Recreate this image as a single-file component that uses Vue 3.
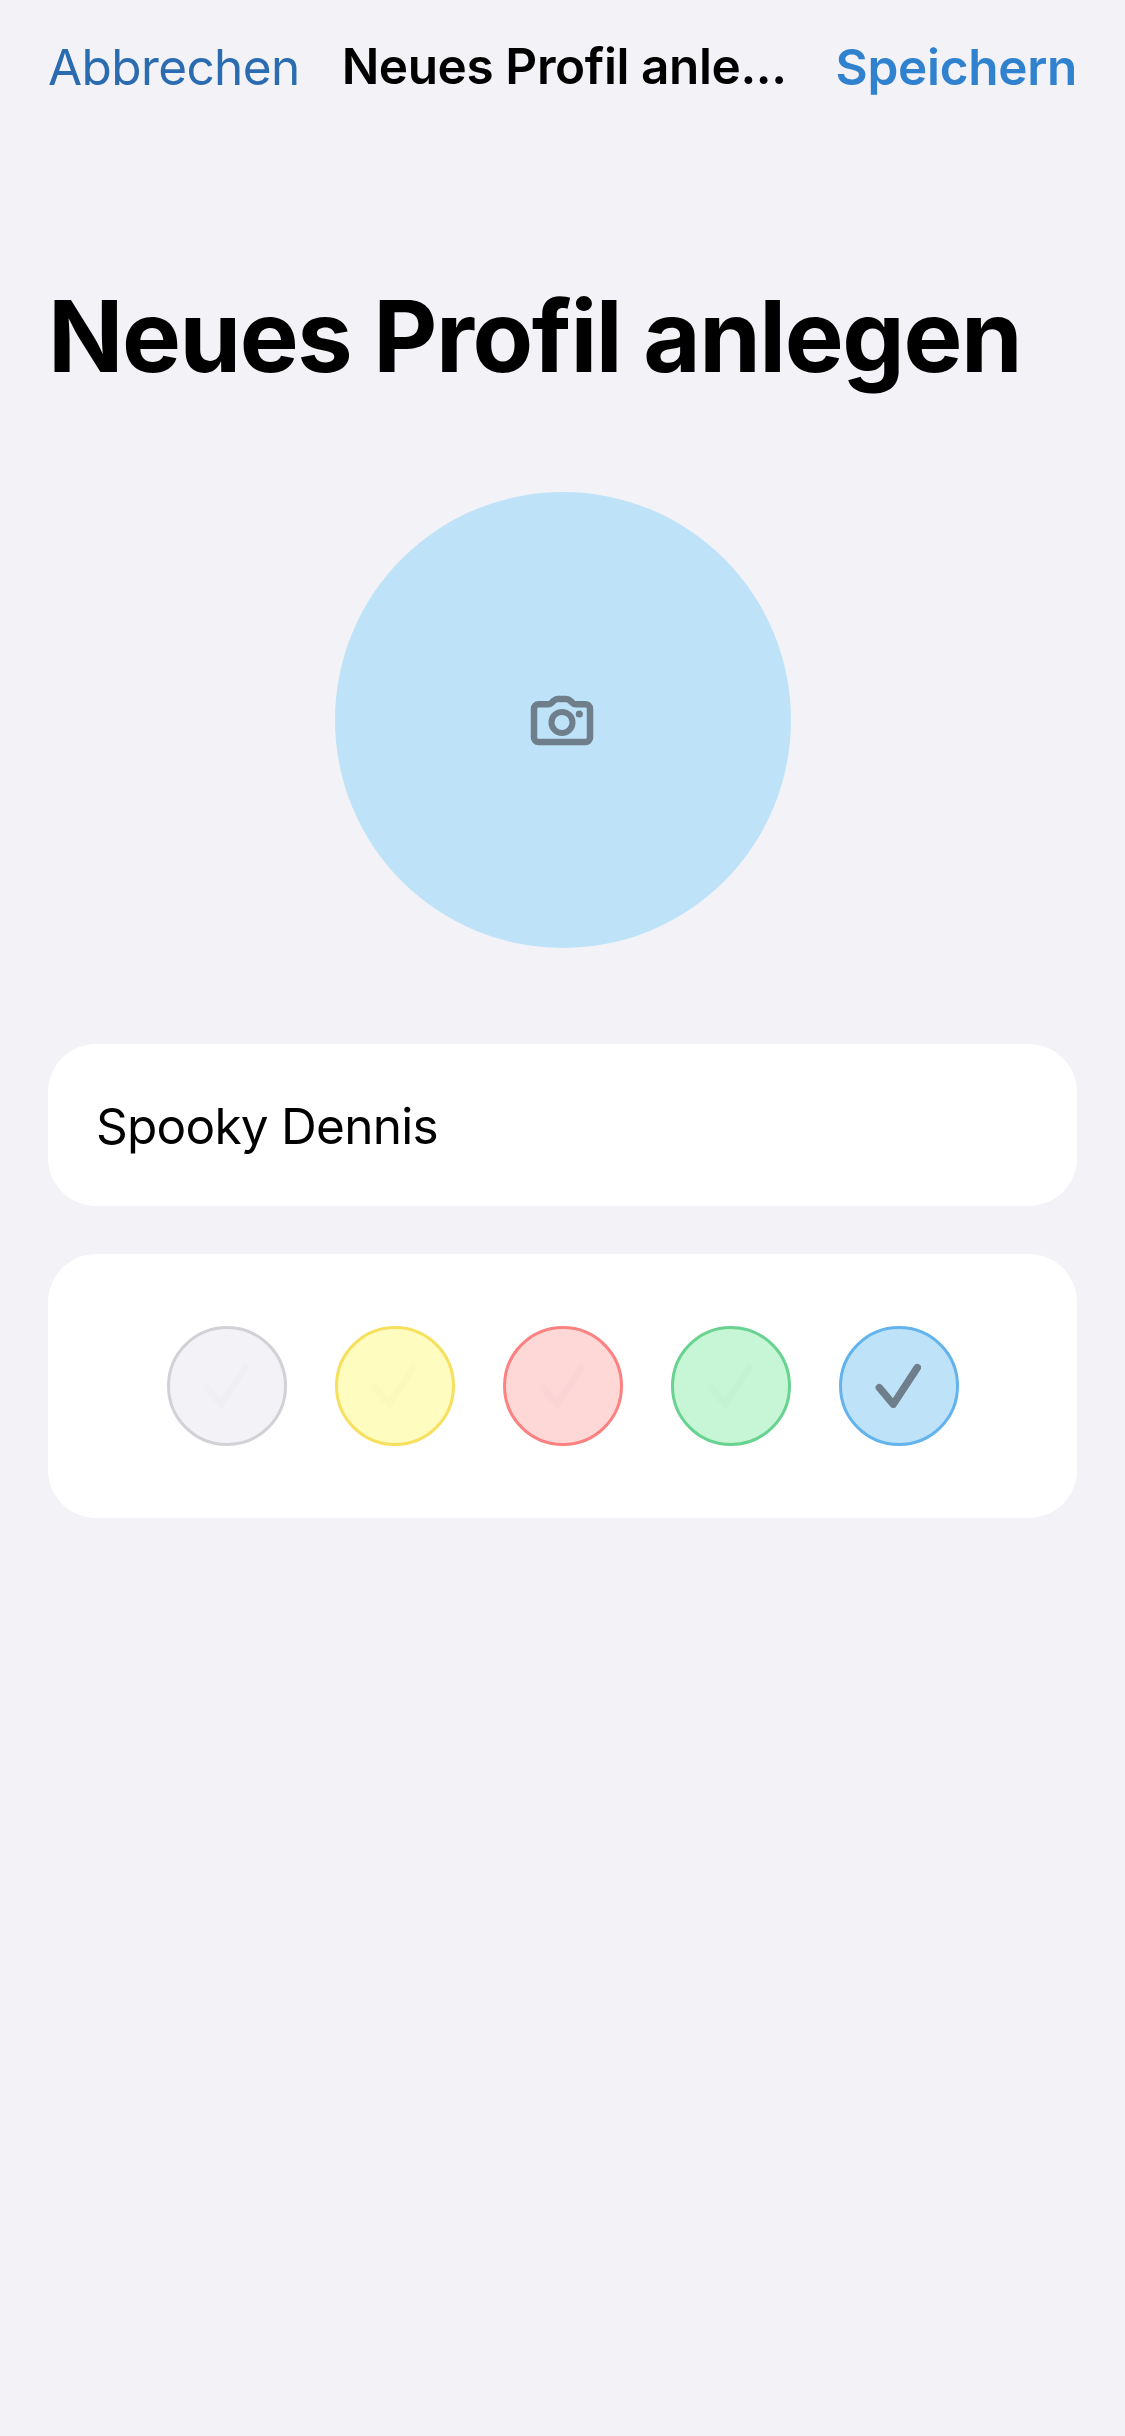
<script setup>
import { ref } from 'vue'

const name = ref('Spooky Dennis')
const selected = ref('blue')
const swatches = [
  { id: 'gray' },
  { id: 'yellow' },
  { id: 'red' },
  { id: 'green' },
  { id: 'blue' },
]
</script>

<template>
  <main class="screen">
    <header class="navbar">
      <a class="cancel">Abbrechen</a>
      <span class="title">Neues Profil anle...</span>
      <a class="save">Speichern</a>
    </header>

    <h1 class="heading">Neues Profil anlegen</h1>

    <div class="avatar">
      <svg class="camera" width="72" height="72" viewBox="0 0 72 72" fill="none">
        <g class="ink-group">
          <path
            d="M11.5 20.3H21c1.6 0 2.6-.5 3.7-1.6l2.2-2.1c1-1.1 2.200-1.700 3.800-1.700h8.600c1.600 0 2.800.6 3.800 1.700l2.200 2.100c1.100 1.100 2.100 1.600 3.700 1.600h9.500A4.500 4.500 0 0 1 63 24.800v28.700a4.500 4.500 0 0 1-4.500 4.500h-47A4.500 4.500 0 0 1 7 53.500V24.800A4.500 4.500 0 0 1 11.500 20.300Z"
            stroke="#3c3c43" stroke-width="6.5" stroke-linejoin="round"
          />
          <circle cx="35" cy="38.400" r="10.500" stroke="#3c3c43" stroke-width="6" />
          <circle cx="52.300" cy="30" r="3.600" fill="#3c3c43" />
        </g>
      </svg>
    </div>

    <section class="card name-card">
      <span class="name">{{ name }}</span>
    </section>

    <section class="card swatch-card">
      <button
        v-for="s in swatches"
        :key="s.id"
        class="swatch"
        :class="[s.id, { selected: s.id === selected }]"
        @click="selected = s.id"
      >
        <svg class="tick" width="114" height="114" viewBox="3 3 114 114" fill="none">
          <path
            d="M40.300 61.600 54.300 78.300 78.300 41.600"
            stroke="#3c3c43" stroke-width="7.400" stroke-linecap="round" stroke-linejoin="round"
          />
        </svg>
      </button>
    </section>
  </main>
</template>

<style>
body {
  background: #f2f2f7;
}
</style>

<style scoped>
.screen {
  box-sizing: border-box;
  width: 1125px;
  height: 2436px;
  padding: 0 48px;
  background: #f2f2f7;
  color: #000;
  font-family: Inter, 'Liberation Sans', sans-serif;
  display: flex;
  flex-direction: column;
  overflow: hidden;
}

.navbar {
  height: 133px;
  display: flex;
  align-items: center;
  justify-content: space-between;
  flex: none;
  font-size: 49.5px;
  line-height: 60px;
  white-space: nowrap;
}

.cancel {
  color: #2b6cb0;
  letter-spacing: -0.6px;
}

.title {
  font-weight: 600;
  letter-spacing: -0.4px;
  padding: 0 7px 1px 0;
}

.save {
  color: #3182ce;
  font-weight: 600;
  letter-spacing: -0.3px;
}

.heading {
  margin: 143px 0 0;
  font-size: 99px;
  font-weight: 700;
  line-height: 120px;
  letter-spacing: -1.45px;
  white-space: nowrap;
}

.avatar {
  width: 456px;
  height: 456px;
  margin: 96px 0 0 287px;
  border-radius: 50%;
  background: #bee3f8;
  display: flex;
  align-items: center;
  justify-content: center;
  flex: none;
}

.ink-group {
  opacity: 0.6;
}

.card {
  box-sizing: border-box;
  border-radius: 48px;
  background: #fff;
  display: flex;
  align-items: center;
  flex: none;
}

.name-card {
  height: 162px;
  margin-top: 96px;
  padding: 1px 48px 0;
}

.name {
  font-size: 49.5px;
  line-height: 60px;
  letter-spacing: -0.75px;
}

.swatch-card {
  height: 264px;
  margin-top: 48px;
  padding-left: 119px;
  gap: 48px;
}

.swatch {
  box-sizing: border-box;
  width: 120px;
  height: 120px;
  padding: 0;
  border: 3px solid;
  border-radius: 50%;
  display: block;
  flex: none;
}

.tick {
  display: block;
  opacity: 0.008;
}

.selected .tick {
  opacity: 0.6;
}

.gray {
  background: #f2f2f7;
  border-color: #d1d1d6;
}

.yellow {
  background: #fefcbf;
  border-color: #f6e05e;
}

.red {
  background: #fed7d7;
  border-color: #fc8181;
}

.green {
  background: #c6f6d5;
  border-color: #68d391;
}

.blue {
  background: #bee3f8;
  border-color: #63b3ed;
}
</style>
